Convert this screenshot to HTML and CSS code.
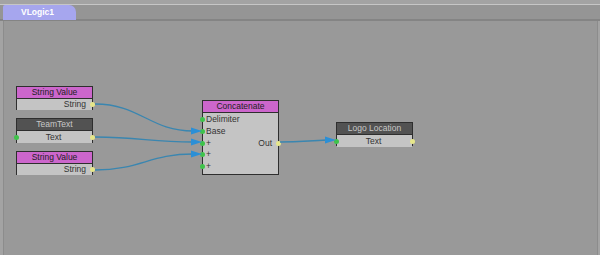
FILE: index.html
```html
<!DOCTYPE html>
<html>
<head>
<meta charset="utf-8">
<link rel="stylesheet" href="styles.css">
</head>
<body>
<div class="app">
  <div class="tabbar">
    <div class="tab">VLogic1</div>
  </div>
  <div class="canvas">
    <div class="node n-sv1">
      <div class="head magenta">String Value</div>
      <div class="body"><div class="row right out">String</div></div>
    </div>
    <div class="node n-team">
      <div class="head dark">TeamText</div>
      <div class="body"><div class="row center in out">Text</div></div>
    </div>
    <div class="node n-sv2">
      <div class="head magenta">String Value</div>
      <div class="body"><div class="row right out">String</div></div>
    </div>
    <div class="node n-concat">
      <div class="head magenta">Concatenate</div>
      <div class="body grid">
        <div class="row in">Delimiter</div>
        <div class="row in">Base</div>
        <div class="row in">+</div>
        <div class="row in">+</div>
        <div class="row in">+</div>
        <div class="row right out outcell">Out</div>
      </div>
    </div>
    <div class="node n-logo">
      <div class="head dark">Logo Location</div>
      <div class="body"><div class="row center in out">Text</div></div>
    </div>
    <svg class="wires" width="600" height="234" viewBox="0 21 600 234">
      <g fill="none" stroke="#3a86b0" stroke-width="1.3">
        <path d="M95 104 C 140 104, 150 131, 193 131"/>
        <path d="M95 137 C 140 137, 150 142, 193 142"/>
        <path d="M95 170 C 140 170, 150 154, 193 154"/>
        <path d="M280 142 C 300 142, 305 141, 327 140"/>
      </g>
      <g fill="#2b8fd6">
        <path d="M191 127.5 L202 131 L191 134.5 Z"/>
        <path d="M191 138.5 L202 142 L191 145.5 Z"/>
        <path d="M191 150.5 L202 154 L191 157.5 Z"/>
        <path d="M325 136.5 L336 140 L325 143.5 Z"/>
      </g>
    </svg>
  </div>
</div>
</body>
</html>
```
FILE: styles.css
```css
html, body {
  margin: 0;
  padding: 0;
  width: 600px;
  height: 255px;
  overflow: hidden;
  background: #a3a3a3;
  font-family: "Liberation Sans", Arial, sans-serif;
}
.app {
  display: flex;
  flex-direction: column;
  height: 255px;
}
.tabbar {
  margin-top: 4px;
  border-top: 1px solid #c6c6c6;
  border-bottom: 2px solid #848484;
  background: #959595;
  display: flex;
  align-items: flex-end;
  padding-left: 3px;
  height: 14px;
}
.tab {
  width: 73px;
  height: 15px;
  margin-bottom: -1px;
  background: #a6a6ee;
  border-radius: 2px 7px 0 0;
  color: #fff;
  font-weight: bold;
  font-size: 8.5px;
  line-height: 15px;
  text-align: center;
  box-sizing: border-box;
  padding-right: 4px;
}
.canvas {
  flex: 1;
  position: relative;
  margin: 0 2px 0 3px;
  border-left: 1px solid #8c8c8c;
  border-right: 1px solid #8c8c8c;
  background: #999999;
}
.node {
  position: absolute;
  width: 77px;
  border: 1px solid #2e2e2e;
  box-sizing: border-box;
  font-size: 8.5px;
  display: flex;
  flex-direction: column;
}
.head {
  height: 11px;
  line-height: 11px;
  text-align: center;
  border-bottom: 1px solid #2e2e2e;
}
.magenta { background: #cc66cc; color: #222; }
.dark { background: #525252; color: #c8c8c8; }
.body {
  background: #c4c4c4;
  color: #333;
}
.row {
  position: relative;
  height: 11px;
  line-height: 11px;
  padding: 0 6px 0 4px;
}
.right { text-align: right; }
.center { text-align: center; }
.in::before, .out::after {
  content: "";
  position: absolute;
  top: 3px;
  width: 5px;
  height: 5px;
  border-radius: 50%;
}
.in::before { left: -3px; background: #3fc34a; }
.out::after { right: -3px; background: #e6e68a; }
.n-sv1 { left: 12px; top: 65px; height: 24px; }
.n-team { left: 12px; top: 97px; height: 25px; }
.n-sv2 { left: 12px; top: 130px; height: 24px; }
.n-concat { left: 198px; top: 79px; width: 77px; height: 75px; }
.n-logo { left: 332px; top: 101px; width: 77px; height: 24px; }
.n-team .row, .n-logo .row { height: 12px; line-height: 12px; }
.n-team .in::before, .n-team .out::after, .n-logo .in::before, .n-logo .out::after { top: 4px; }
.grid {
  flex: 1;
  display: grid;
  grid-template-columns: 1fr auto;
  grid-template-rows: repeat(5, 11.8px);
  padding-top: 1px;
}
.grid .in { grid-column: 1; padding-left: 3px; }
.grid .outcell { grid-column: 2; grid-row: 3; padding-right: 6px; }
.wires {
  position: absolute;
  left: -4px;
  top: 0;
}
```
